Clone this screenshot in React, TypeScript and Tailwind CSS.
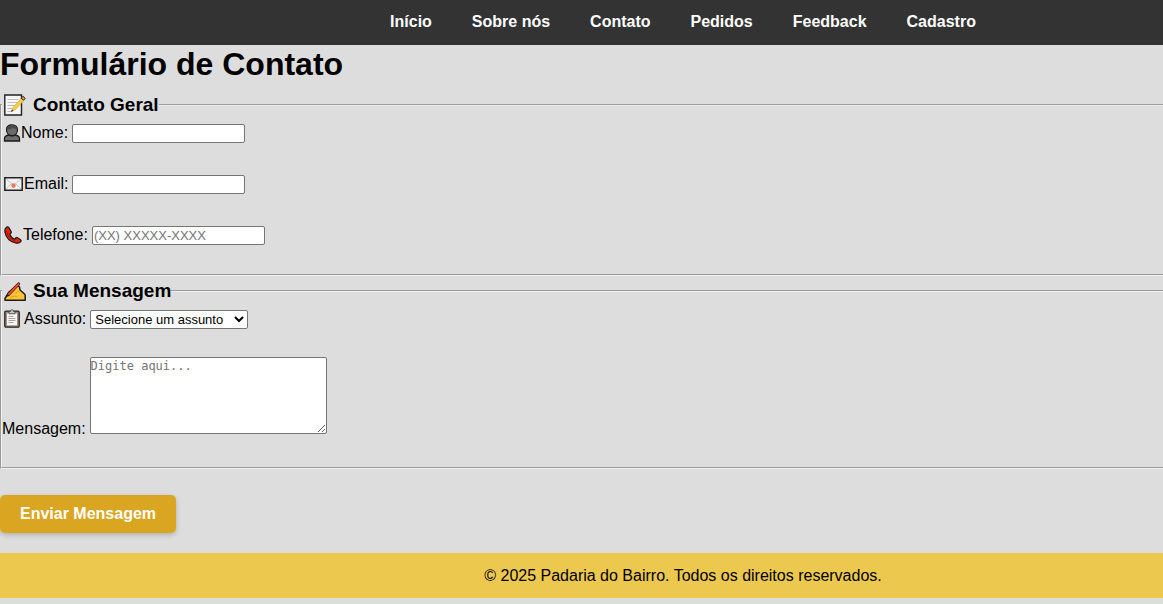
import type { ReactNode } from "react";

const links = ["Início", "Sobre nós", "Contato", "Pedidos", "Feedback", "Cadastro"];

const fieldset =
  "border-2 border-r-0 border-[#f0f0f0] [border-style:groove] pb-[29px]";
const legend = "flex h-[22px] items-center gap-[7px] pl-[2px] text-[19px] font-bold leading-[22px]";
const input =
  "h-[19px] w-[173px] rounded-[2px] border border-[#767676] bg-white px-px text-[13px] placeholder:text-[#757575]";

function MemoIcon() {
  return (
    <svg width="22" height="22" viewBox="0 0 22 22" aria-hidden="true">
      <path d="M.8 1h16.700v20H.8z" fill="#f7f7f7" stroke="#222" strokeWidth="1.4" />
      <path d="M3.500 5.500h11M3.500 8.500h10M3.500 11.500h8M3.500 14.500h6M3.500 17.500h4" stroke="#bdbdbd" />
      <path d="M7.500 17.500l1.500-4L18 3.500l2.500 2.200L11.500 15.500z" fill="#f8cc48" stroke="#d9a030" strokeWidth=".6" />
      <path d="M17.200 4.200L18.900 2.300l2.300 2-1.700 1.900z" fill="#e8a23a" stroke="#222" strokeWidth="1" />
      <path d="M7 18l1-2.500 1.500 1.300z" fill="#333" />
    </svg>
  );
}

function PersonIcon() {
  return (
    <svg width="18" height="18" viewBox="0 0 18 18" aria-hidden="true">
      <path d="M1.500 17v-2.500c0-2 1.500-3 4.500-3.500h6c3 .5 4.500 1.500 4.500 3.500V17z" fill="#6f6f6f" stroke="#1c1c1c" strokeWidth="1.300" />
      <path d="M6.500 9h5v3.500c-1.500 1-3.500 1-5 0z" fill="#505050" />
      <path d="M9 .8c-3.500 0-5.500 2-5.500 4.900 0 3.500 2.400 6 5.500 6s5.500-2.500 5.500-6C14.500 2.800 12.500.8 9 .8z" fill="#6b6b6b" stroke="#1c1c1c" strokeWidth="1.200" />
      <path d="M4 5.500C4 2.600 6 1.200 9 1.200s5 1.400 5 4.100c-2 0-3-.6-4-1.600-1.400 1.300-3.500 1.800-6 1.800z" fill="#4a4a4a" />
    </svg>
  );
}

function EnvelopeIcon() {
  return (
    <svg width="19" height="14" viewBox="0 0 19 14" aria-hidden="true">
      <path d="M.8.8h17.400v12.400H.8z" fill="#f1f1f1" stroke="#222" strokeWidth="1.500" />
      <path d="M2 2l7.500 6L17 2M2 12l5-5M17 12l-5-5" fill="none" stroke="#c5c5c5" />
      <path d="M9.500 6.300c1.600 0 2.400 1 2.200 2.300-.2 1.400-1 2.300-2.200 2.300s-2-.9-2.200-2.300c-.2-1.300.6-2.300 2.200-2.300z" fill="#f07860" />
    </svg>
  );
}

function PhoneIcon() {
  return (
    <svg width="18" height="18" viewBox="0 0 18 18" aria-hidden="true">
      <path
        d="M2.800 1C1 2.200.5 4 1 6.500 2 11.500 6 15.700 11.500 17c2.500.5 4.400 0 5.400-1.600.4-.7.200-1.300-.4-1.700l-3-2c-.7-.4-1.300-.3-1.800.3l-1 1.200C8.300 12.300 6.500 10.500 5.800 8.300L6.900 7c.5-.5.6-1.100.2-1.700L4.700 1.400C4.200.7 3.500.6 2.800 1z"
        fill="#e0220f" stroke="#1c1c1c" strokeWidth="1.200" strokeLinejoin="round"
      />
      <path d="M2.500 5c.5 4.500 3.800 8.700 9 10.300" fill="none" stroke="#a5170c" strokeWidth="1" />
    </svg>
  );
}

function WritingIcon() {
  return (
    <svg width="22" height="22" viewBox="0 0 22 22" aria-hidden="true">
      <path
        d="M1 20.200v-1.700l4-6.500 6-5c1.500-1 3.500-1 4.500 0l.5 3 4.500 4c.5.500.7 1 .7 2v4.200z"
        fill="#fcc534" stroke="#1c1c1c" strokeWidth="1.500" strokeLinejoin="round"
      />
      <path d="M6 17.500l4.500-1.500 3 .8M11.500 13.500l3-2.500" fill="none" stroke="#e39a22" />
      <path d="M4.500 14.500L14.500 4" stroke="#1c1c1c" strokeWidth="3.200" strokeLinecap="round" />
      <path d="M4.500 14.500L14.500 4" stroke="#f0442c" strokeWidth="2" strokeLinecap="round" />
      <path d="M2.500 17l1-3 2 1.500z" fill="#1c1c1c" />
    </svg>
  );
}

function ClipboardIcon() {
  return (
    <svg width="16" height="19" viewBox="0 0 16 19" aria-hidden="true">
      <rect x=".8" y="2.200" width="14.400" height="16" rx="1.200" fill="#a48d80" stroke="#222" strokeWidth="1.300" />
      <path d="M3 4.500h10v11.800H3z" fill="#f6f6f6" />
      <path d="M4.500 7.500h5M4.500 9.500h7M4.500 11.500h7M4.500 13.500h5" stroke="#a5a5a5" />
      <path d="M5 4.800V2.500h1.500C6.700 1.200 7.200.7 8 .7s1.300.5 1.500 1.800H11v2.300z" fill="#c4c4c4" stroke="#444" strokeWidth=".8" />
    </svg>
  );
}

function Row({ id, icon, label, children }: { id: string; icon: ReactNode; label: string; children: ReactNode }) {
  return (
    <div className="flex h-[19px] items-center gap-1">
      <label htmlFor={id} className="flex items-center pb-[2px] leading-[18px]">
        {icon}
        {label}
      </label>
      {children}
    </div>
  );
}

export default function App() {
  return (
    <div className="min-h-screen bg-[#dddddd] font-['Liberation_Sans',Arial,sans-serif] text-base text-black">
      <nav className="flex h-[45px] items-center justify-center gap-10 bg-[#333333] pb-[2px] pl-[203px] font-bold text-white">
        {links.map((l) => (
          <a key={l} href="#" className="whitespace-nowrap">
            {l}
          </a>
        ))}
      </nav>

      <main>
        <h1 className="pb-[11px] text-[32px] font-bold leading-[38px]">Formulário de Contato</h1>
        <form>
          <fieldset className={fieldset}>
            <legend className={legend}>
              <MemoIcon />
              Contato Geral
            </legend>
            <div className="flex flex-col gap-8 pl-px pt-2">
              <Row id="nome" icon={<PersonIcon />} label="Nome:">
                <input id="nome" type="text" className={input} />
              </Row>
              <Row id="email" icon={<span className="px-px"><EnvelopeIcon /></span>} label="Email:">
                <input id="email" type="email" className={input} />
              </Row>
              <Row id="telefone" icon={<span className="px-px"><PhoneIcon /></span>} label="Telefone:">
                <input id="telefone" type="tel" placeholder="(XX) XXXXX-XXXX" className={input} />
              </Row>
            </div>
          </fieldset>

          <fieldset className={`${fieldset} mt-1`}>
            <legend className={legend}>
              <WritingIcon />
              Sua Mensagem
            </legend>
            <div className="flex flex-col gap-7 pb-1 pl-px pt-2">
              <Row id="assunto" icon={<span className="pl-px pr-1"><ClipboardIcon /></span>} label="Assunto:">
                <select
                  id="assunto"
                  className="h-[19px] w-[158px] rounded-[2px] border border-[#767676] bg-white text-[13px]"
                >
                  <option>Selecione um assunto</option>
                </select>
              </Row>
              <div className="-ml-px flex items-end gap-1">
                <label htmlFor="mensagem" className="leading-[10px]">
                  Mensagem:
                </label>
                <textarea
                  id="mensagem"
                  placeholder="Digite aqui..."
                  className="h-[77px] w-[237px] rounded-[2px] border border-[#767676] bg-white font-['DejaVu_Sans_Mono',monospace] text-[12px] leading-[16px] placeholder:text-[#757575]"
                />
              </div>
            </div>
          </fieldset>

          <button
            type="submit"
            className="mt-[26px] block h-[38px] rounded-[5px] bg-[#daa520] px-5 font-bold text-white shadow-[0_2px_5px_rgba(0,0,0,0.2)]"
          >
            Enviar Mensagem
          </button>
        </form>
      </main>

      <footer className="mt-5 flex h-[45px] items-center justify-center bg-[#ecc84e] pl-[203px]">
        <p>© 2025 Padaria do Bairro. Todos os direitos reservados.</p>
      </footer>
    </div>
  );
}
